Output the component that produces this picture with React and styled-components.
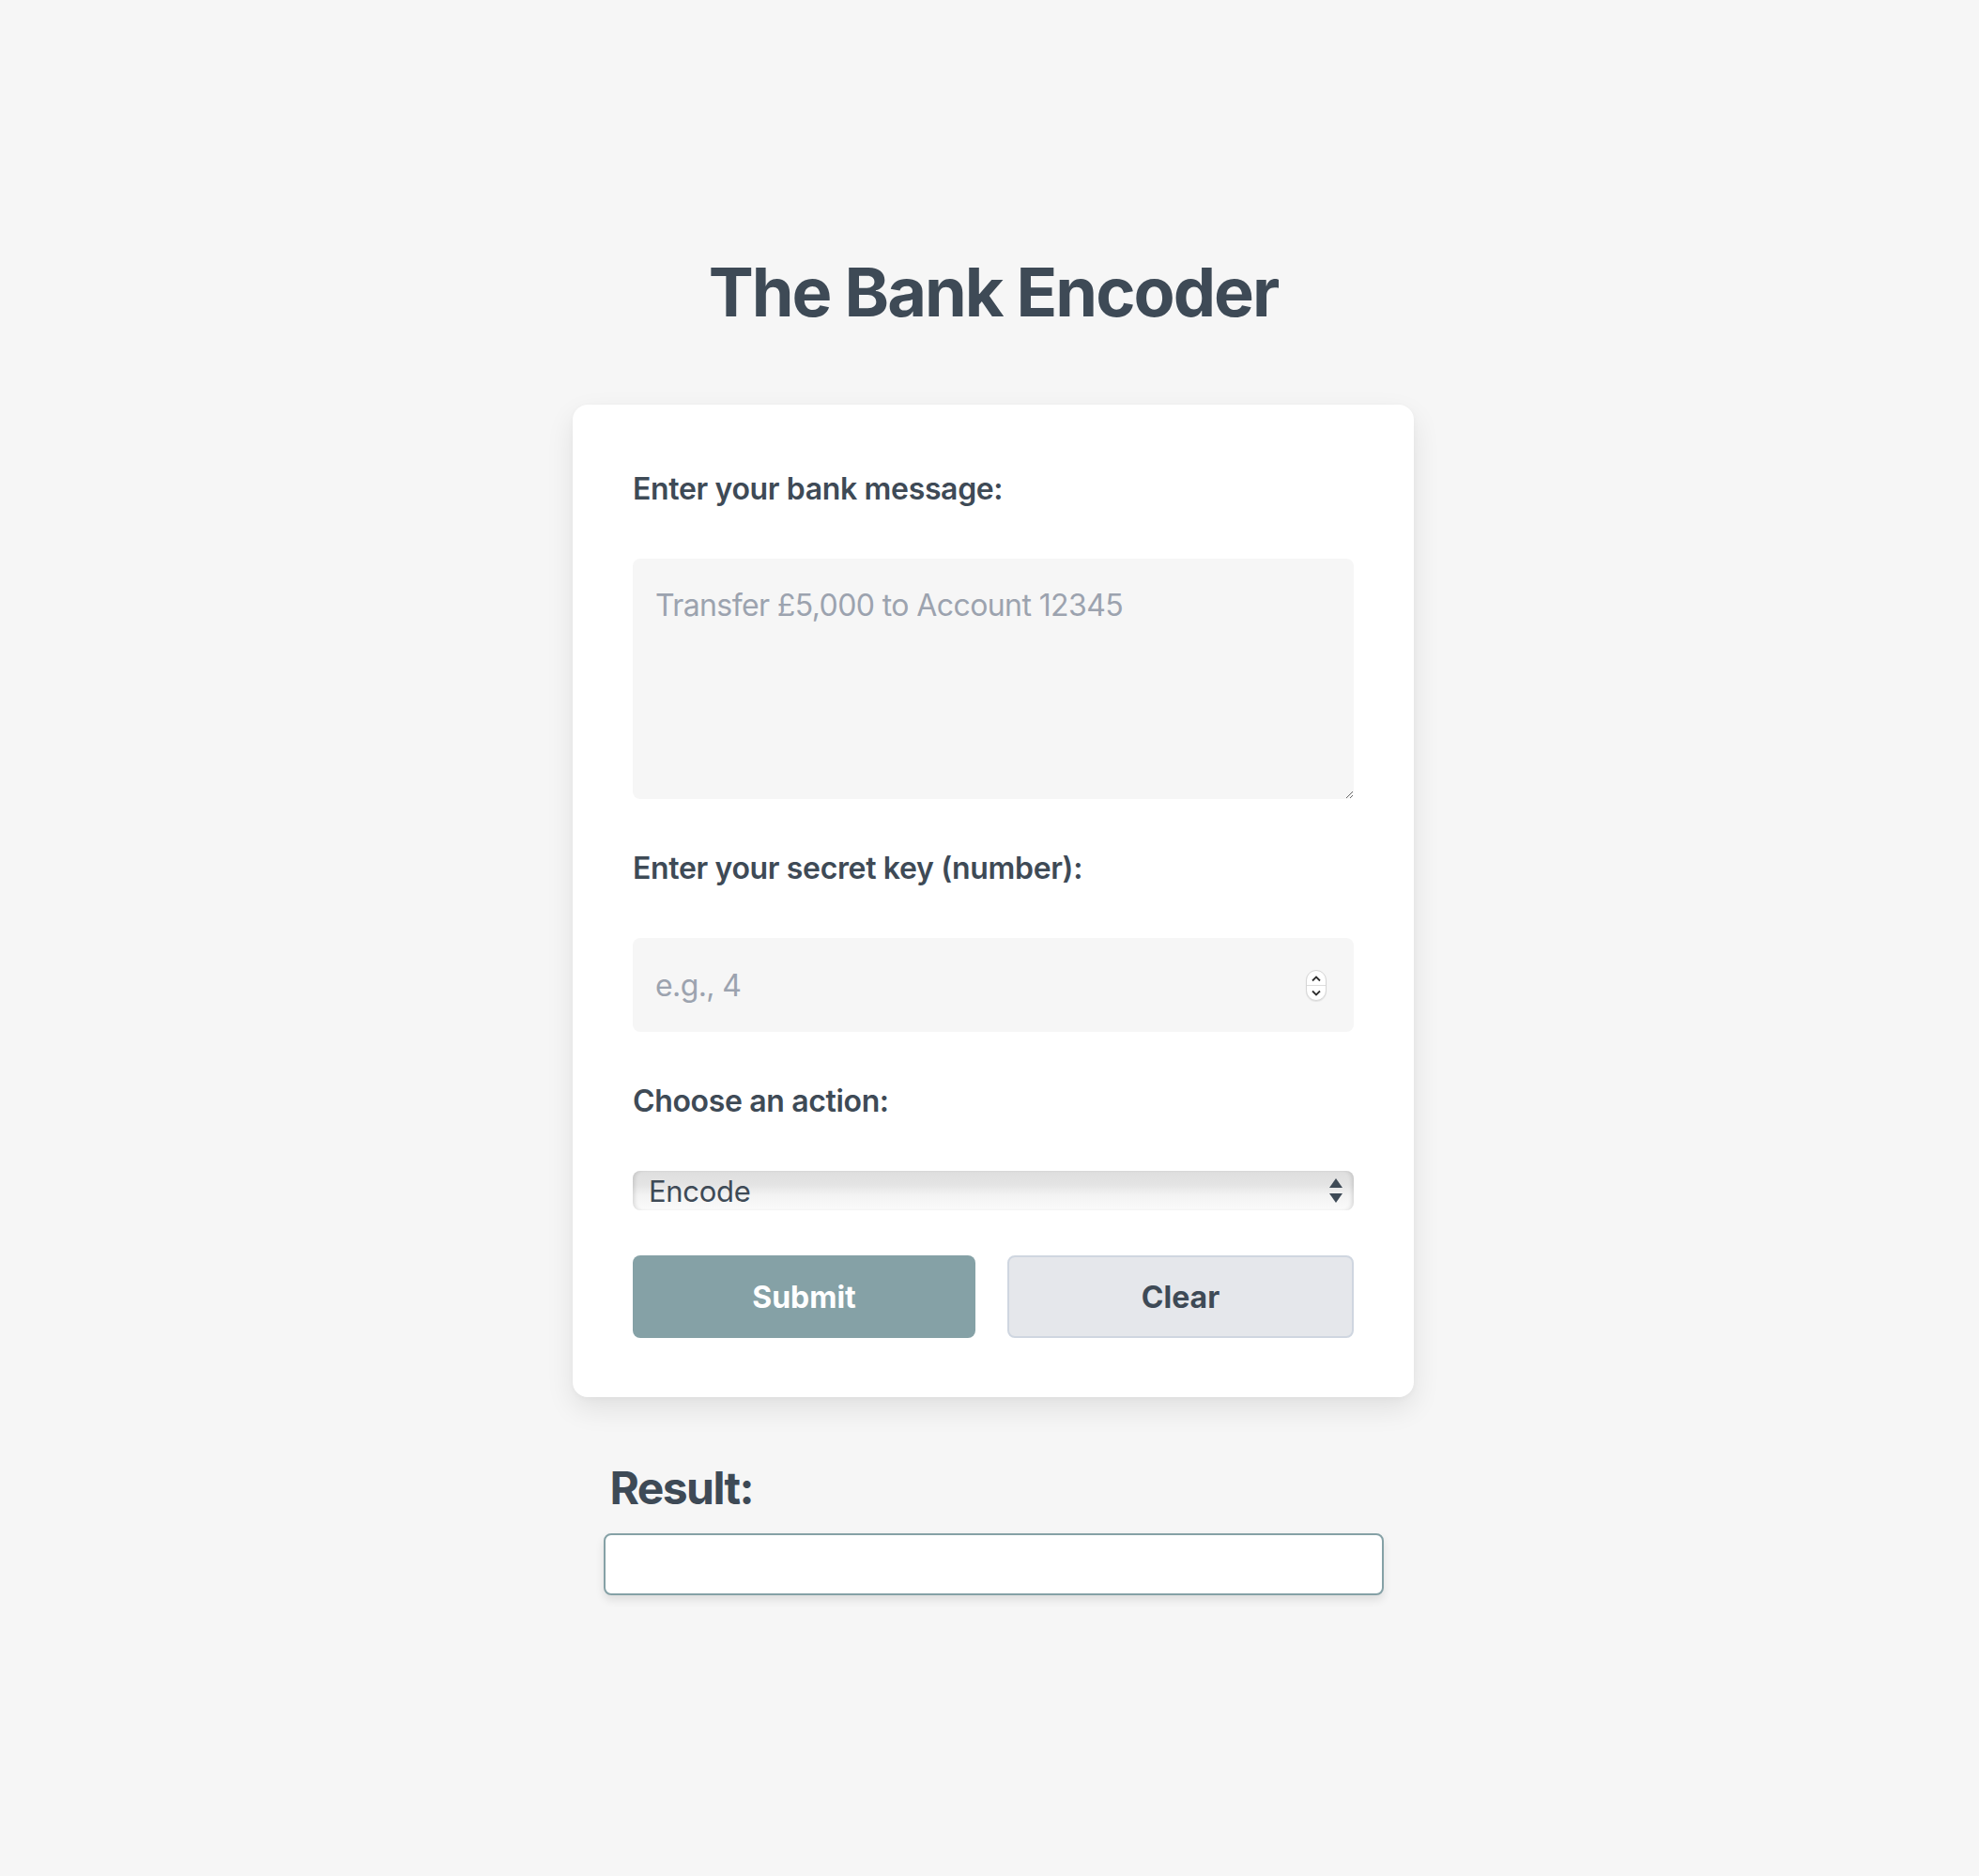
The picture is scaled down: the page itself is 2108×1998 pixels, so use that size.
import React, { useState } from "react";
import styled, { createGlobalStyle } from "styled-components";

const GlobalStyle = createGlobalStyle`
  html, body {
    margin: 0;
    padding: 0;
    background: #f6f6f6;
  }
  body {
    font-family: Inter, "Noto Sans", "Liberation Sans", sans-serif;
    color: #3e4a56;
  }
  * {
    box-sizing: border-box;
  }
`;

const Page = styled.main`
  min-height: 1998px;
  padding: 271px 0 0 8px;
  display: flex;
  flex-direction: column;
  align-items: center;
`;

const Title = styled.h1`
  margin: 0 0 80px;
  font-size: 72px;
  line-height: 80px;
  font-weight: 700;
  letter-spacing: -2px;
  color: #3e4a56;
`;

const Card = styled.form`
  width: 896px;
  padding: 64px 64px 63px;
  background: #fff;
  border-radius: 16px;
  box-shadow: 0 12px 30px rgba(0, 0, 0, 0.09), 0 2px 6px rgba(0, 0, 0, 0.03);
  display: flex;
  flex-direction: column;
  gap: 48px;
`;

const Label = styled.label`
  display: block;
  font-size: 32px;
  line-height: 52px;
  font-weight: 600;
  letter-spacing: -0.35px;
  color: #3e4a56;
`;

const fieldBase = `
  width: 100%;
  border: none;
  outline: none;
  background: #f6f6f6;
  border-radius: 8px;
  font-family: Inter, "Noto Sans", "Liberation Sans", sans-serif;
  font-size: 32px;
  letter-spacing: -0.6px;
  color: #3e4a56;
  &::placeholder {
    color: #9ca3af;
  }
`;

const TextArea = styled.textarea`
  ${fieldBase}
  display: block;
  height: 256px;
  padding: 24px;
  line-height: 52px;
  resize: vertical;
`;

const NumberWrap = styled.div`
  position: relative;
`;

const NumberInput = styled.input`
  ${fieldBase}
  display: block;
  height: 100px;
  padding: 0 24px;
  -moz-appearance: textfield;
  &::-webkit-inner-spin-button,
  &::-webkit-outer-spin-button {
    -webkit-appearance: none;
    margin: 0;
  }
`;

const Spinner = styled.div`
  position: absolute;
  right: 29px;
  top: 34px;
  width: 22px;
  height: 33px;
  border-radius: 11px;
  background: #fff;
  border: 1px solid #d6d6d6;
  box-shadow: 0 1px 1px rgba(0, 0, 0, 0.08);
  display: flex;
  flex-direction: column;
  overflow: hidden;
`;

const SpinHalf = styled.div`
  flex: 1;
  display: flex;
  align-items: center;
  justify-content: center;
  border-top: ${(p) => (p.$bottom ? "1px solid #dcdcdc" : "none")};
`;

const SelectWrap = styled.div`
  position: relative;
`;

const Select = styled.select`
  display: block;
  width: 100%;
  height: 42px;
  padding: 0 40px 0 17px;
  appearance: none;
  -webkit-appearance: none;
  border: none;
  outline: none;
  border-radius: 8px;
  font-family: Inter, "Noto Sans", "Liberation Sans", sans-serif;
  font-size: 31px;
  letter-spacing: -0.3px;
  color: #3e4a56;
  background: linear-gradient(
    to bottom,
    #dedede 0%,
    #e4e4e4 35%,
    #f2f2f2 60%,
    #fbfbfb 100%
  );
  box-shadow: inset 4px 0 4px -2px rgba(0, 0, 0, 0.12),
    inset -4px 0 4px -2px rgba(0, 0, 0, 0.12);
`;

const SelectArrows = styled.svg`
  position: absolute;
  right: 12px;
  top: 8px;
  pointer-events: none;
`;

const Buttons = styled.div`
  display: flex;
  gap: 34px;
`;

const Button = styled.button`
  flex: 1;
  height: 88px;
  border-radius: 8px;
  font-family: Inter, "Noto Sans", "Liberation Sans", sans-serif;
  font-size: 32px;
  font-weight: 700;
  cursor: pointer;
  background: ${(p) => (p.$primary ? "#85a1a6" : "#e5e7eb")};
  color: ${(p) => (p.$primary ? "#fff" : "#3e4a56")};
  border: ${(p) => (p.$primary ? "none" : "2px solid #cfd6e0")};
`;

const ResultSection = styled.section`
  width: 831px;
  margin-top: 65px;
`;

const ResultTitle = styled.h2`
  margin: 0 0 16px;
  padding-left: 7px;
  font-size: 48px;
  line-height: 64px;
  font-weight: 700;
  letter-spacing: -1.6px;
  color: #3e4a56;
`;

const ResultBox = styled.div`
  height: 66px;
  background: #fff;
  border: 2px solid #85a1a6;
  border-radius: 8px;
  box-shadow: 0 5px 10px rgba(0, 0, 0, 0.1);
  padding: 0 16px;
  font-size: 32px;
  line-height: 62px;
`;

const App = () => {
  const [message, setMessage] = useState("");
  const [key, setKey] = useState("");
  const [action, setAction] = useState("encode");
  const [result, setResult] = useState("");

  const shift = (text, n) =>
    text.replace(/[a-z]/gi, (c) => {
      const base = c <= "Z" ? 65 : 97;
      return String.fromCharCode(((c.charCodeAt(0) - base + n) % 26 + 26) % 26 + base);
    });

  const onSubmit = (e) => {
    e.preventDefault();
    const n = parseInt(key, 10) || 0;
    setResult(shift(message, action === "encode" ? n : -n));
  };

  const onClear = () => {
    setMessage("");
    setKey("");
    setResult("");
  };

  return (
    <>
      <GlobalStyle />
      <Page>
        <Title>The Bank Encoder</Title>
        <Card onSubmit={onSubmit}>
          <Label htmlFor="message">Enter your bank message:</Label>
          <TextArea
            id="message"
            placeholder="Transfer £5,000 to Account 12345"
            value={message}
            onChange={(e) => setMessage(e.target.value)}
          />
          <Label htmlFor="key">Enter your secret key (number):</Label>
          <NumberWrap>
            <NumberInput
              id="key"
              type="number"
              placeholder="e.g., 4"
              value={key}
              onChange={(e) => setKey(e.target.value)}
            />
            <Spinner>
              <SpinHalf>
                <svg width="12" height="8" viewBox="0 0 12 8">
                  <path d="M2 6.5 L6 2.5 L10 6.5" fill="none" stroke="#2f2f2f" strokeWidth="1.8" />
                </svg>
              </SpinHalf>
              <SpinHalf $bottom>
                <svg width="12" height="8" viewBox="0 0 12 8">
                  <path d="M2 1.5 L6 5.5 L10 1.5" fill="none" stroke="#2f2f2f" strokeWidth="1.8" />
                </svg>
              </SpinHalf>
            </Spinner>
          </NumberWrap>
          <Label htmlFor="action">Choose an action:</Label>
          <SelectWrap>
            <Select id="action" value={action} onChange={(e) => setAction(e.target.value)}>
              <option value="encode">Encode</option>
              <option value="decode">Decode</option>
            </Select>
            <SelectArrows width="14" height="27" viewBox="0 0 14 27">
              <path d="M7 0 L14 10 L0 10 Z" fill="#3e4a56" />
              <path d="M0 16 L14 16 L7 26 Z" fill="#3e4a56" />
            </SelectArrows>
          </SelectWrap>
          <Buttons>
            <Button type="submit" $primary>
              Submit
            </Button>
            <Button type="button" onClick={onClear}>
              Clear
            </Button>
          </Buttons>
        </Card>
        <ResultSection>
          <ResultTitle>Result:</ResultTitle>
          <ResultBox>{result}</ResultBox>
        </ResultSection>
      </Page>
    </>
  );
};

export default App;
